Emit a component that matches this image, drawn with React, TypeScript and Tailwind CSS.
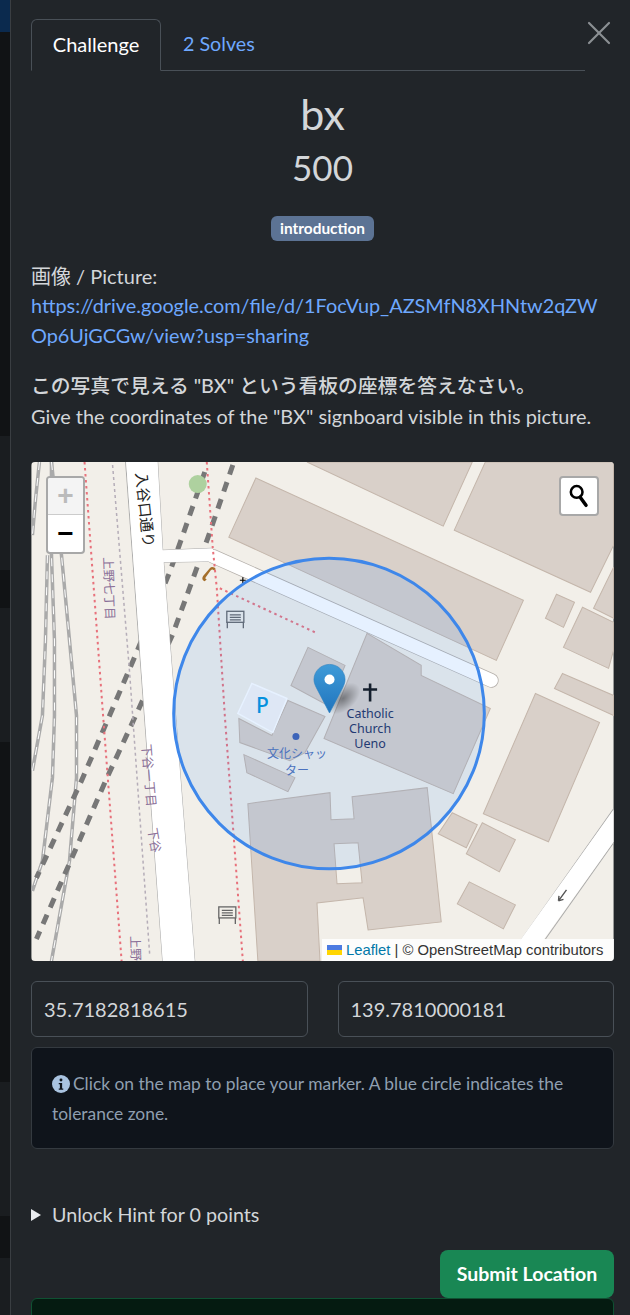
import { X } from "lucide-react";

const bands = [
  "h-[32px] bg-[#0b2a4e]",
  "h-[404px] bg-[#111315]",
  "h-[134px] bg-[#1a1d20]",
  "h-[38px] bg-[#111315]",
  "h-[134px] bg-[#1a1d20]",
  "h-[340px] bg-[#111315]",
  "h-[134px] bg-[#1a1d20]",
  "h-[42px] bg-[#111315]",
  "h-[57px] bg-[#1a1d20]",
];

const buildings = [
  "307,462 472,462 443,526",
  "256,478 523,600 496,660 229,537",
  "485,462 613,462 613,545 590,592 454,530",
  "556,594 574,602 563,627 545,618",
  "582,607 613,622 613,650 608,668 563,647",
  "613,567 593,608 613,618",
  "562,673 613,695 613,715 554,688",
  "535,693 599,722 548,841 483,813",
  "452,812 477,824 466,847 438,833",
  "482,822 515,839 499,871 466,853",
  "469,881 515,904 503,928 457,903",
  "248,803 330,792 331,819 354,818 352,796 427,787 441,921 368,929 363,897 317,902 320,960 258,960",
  "308,647 345,665 328,705 291,685",
  "367,633 421,665 421,675 490,708 453,793 324,738",
  "239,718 272,735 288,700 325,716 305,752 290,760 240,742",
  "244,754 295,777 288,791 247,772",
];

const tracks = [
  "40,462 36,500 33,535",
  "52,462 52,555 55,640 55,715 53,777 43,860 33,890",
  "52,462 62,555 70,640 77,715 77,777 70,860 52,960",
  "48,555 46,640 43,715 33,770",
];

function SignIcon({ x, y }: { x: number; y: number }) {
  return (
    <g transform={`translate(${x} ${y})`} fill="none" stroke="#666" strokeWidth="1.3">
      <rect x="0" y="0" width="17" height="11" />
      <path d="M3 3.5h11M3 6h11M3 8.5h11M0.5 11v6M16.5 11v6" />
    </g>
  );
}

function MapDrawing() {
  return (
    <svg viewBox="32 462 581 498" className="block h-full w-full">
      <defs>
        <linearGradient id="pin" x1="0" y1="0" x2="0" y2="1">
          <stop offset="0" stopColor="#3f9bd8" />
          <stop offset="1" stopColor="#2074bd" />
        </linearGradient>
        <radialGradient id="pinShadow">
          <stop offset="0" stopColor="#000" stopOpacity="0.4" />
          <stop offset="1" stopColor="#000" stopOpacity="0" />
        </radialGradient>
      </defs>
      <rect x="32" y="462" width="581" height="498" fill="#f2efe9" />
      {buildings.map((points) => (
        <polygon key={points} points={points} fill="#d9d0c9" stroke="#c4b6ab" strokeWidth="1" />
      ))}
      <polygon points="334,843 358,842 362,882 337,883" fill="#f2efe9" stroke="#c4b6ab" />
      <polygon points="252,683 287,698 273,732 238,713" fill="#f6f4f4" stroke="#fff" strokeWidth="1.5" />
      {tracks.map((points) => (
        <g key={points} fill="none">
          <polyline points={points} stroke="#aaaaaa" strokeWidth="3.5" />
          <polyline points={points} stroke="#fff" strokeWidth="1" strokeDasharray="8 8" />
        </g>
      ))}
      <g fill="none" stroke="#777" strokeWidth="5" strokeDasharray="10 8">
        <polyline points="233,465 208,538 197,568 173,634 137,713 107,778 37,938" />
        <polyline points="205,472 182,538 170,572 137,652 110,715 82,780 37,877" />
      </g>
      <g fill="none" stroke="#aaa" strokeWidth="1">
        <polyline points="126,462 163,960" />
        <polyline points="158,462 163,550 213,548" />
        <polyline points="164,562 215,561" />
        <polyline points="164,562 195,960" />
        <polyline points="613,808 520,940" />
        <polyline points="613,842 545,938" />
      </g>
      <polyline points="213,556 491,680" fill="none" stroke="#b5b0ab" strokeWidth="14.500" strokeLinecap="round" />
      <polygon points="126.5,462 158,462 163,550 213,548 215,561 164,562 195,960 163,960" fill="#fff" />
      <polyline points="213,556 491,680" fill="none" stroke="#fff" strokeWidth="13" strokeLinecap="round" />
      <polygon points="613,809 613,841 528,960 505,960" fill="#fff" />
      <path d="M566 889 L558 900 M558 900 l0.500 -5 M558 900 l5 -1.500" fill="none" stroke="#555" strokeWidth="1.4" />
      <g fill="none" stroke="#e8727c" strokeWidth="2" strokeDasharray="2.5 3.5">
        <polyline points="85,462 103,708 122,960" />
        <polyline points="207,462 213,548 217,588 225,715 243,960" />
        <polyline points="220,588 315,632" />
      </g>
      <polyline points="113,465 130,672 135,743 150,953" fill="none" stroke="#b5adb8" strokeWidth="1.5" strokeDasharray="3 3" />
      <circle cx="198" cy="484" r="9" fill="#aed19f" />
      <path d="M205 581c-3-1-3-4-1-6l6-7c2-2 5-1 6 1l-2 1c-1-1-2-1-3 0l-5 7c-1 1 0 2 1 2z" fill="#a56f2b" />
      <path d="M243 577v6M240 580h6" stroke="#000" strokeWidth="1.2" />
      <SignIcon x={227} y={611} />
      <SignIcon x={219} y={906} />
      <g fontFamily="'Noto Sans CJK JP', sans-serif" fontSize="12.5" fill="#8a6f98">
        <text transform="translate(104 557) rotate(88)">上野七丁目</text>
        <text transform="translate(142 744) rotate(85)">下谷一丁目</text>
        <text transform="translate(148 828) rotate(80)">下谷</text>
        <text transform="translate(131 935) rotate(88)">上野</text>
      </g>
      <text
        transform="translate(136 473) rotate(84)"
        fontFamily="'Noto Sans CJK JP', sans-serif"
        fontSize="15"
        fill="#222"
      >
        入谷口通り
      </text>
      <path d="M370 683v18M363 689h14" stroke="#111" strokeWidth="2.6" fill="none" />
      <text fontFamily="'Noto Sans', sans-serif" fontSize="12.5" fill="#1f2f5f" textAnchor="middle">
        <tspan x="370" y="717">Catholic</tspan>
        <tspan x="370" y="732">Church</tspan>
        <tspan x="370" y="747">Ueno</tspan>
      </text>
      <text x="262.500" y="713" fontFamily="'Noto Sans', sans-serif" fontSize="21" fontWeight="500" fill="#0092da" textAnchor="middle">P</text>
      <circle cx="296" cy="736" r="3.5" fill="#3f5fb0" />
      <text fontFamily="'Noto Sans CJK JP', sans-serif" fontSize="12" fill="#4f6fb5" textAnchor="middle">
        <tspan x="297" y="757">文化シャッ</tspan>
        <tspan x="297" y="774">ター</tspan>
      </text>
      <circle cx="329" cy="713" r="155" fill="#3388ff" fillOpacity="0.12" stroke="#3e87ea" strokeWidth="3" />
      <ellipse cx="343" cy="698" rx="20" ry="12" fill="url(#pinShadow)" transform="rotate(-40 343 698)" />
      <path
        d="M329.5 664c-8.500 0-15.500 6.800-15.500 15 0 3 1 5.500 2.500 8.500l13 25 13-25c1.500-3 2.500-5.500 2.500-8.500 0-8.200-7-15-15.500-15z"
        fill="url(#pin)"
        stroke="#2a7fc0"
        strokeWidth="0.6"
      />
      <circle cx="329.500" cy="679" r="5" fill="#fff" />
    </svg>
  );
}

export default function App() {
  return (
    <div className="flex h-[1315px] w-[630px] overflow-hidden bg-[#212529] font-['Lato',sans-serif] text-[#d3d6d9]">
      <div className="flex w-[10px] shrink-0 flex-col">
        {bands.map((band, index) => (
          <div key={index} className={band} />
        ))}
      </div>
      <div className="min-w-0 flex-1 border-l border-[#3a3e42] pl-[20px] pr-[16px] pt-[19px]">
        <div className="relative">
          <div className="mr-[29px] flex h-[52px] border-b border-[#495057]">
            <div className="mb-[-1px] flex w-[130px] items-center justify-center rounded-t-md border border-b-[#212529] border-[#495057] pb-[2px] text-[20px] text-white">
              Challenge
            </div>
            <div className="flex items-center pb-[2px] pl-[22px] text-[19.700px] text-[#6ea8fe]">2 Solves</div>
          </div>
          <X className="absolute right-[-5px] top-[-6px] h-[40px] w-[40px] text-[#8b8f93]" strokeWidth={1.3} />
        </div>

        <div className="flex flex-col items-center">
          <h2 className="mt-[18px] text-[43px] leading-[50px] text-[#d3d6d9]">bx</h2>
          <h3 className="mt-[3px] text-[35px] leading-[50px] text-[#d3d6d9]">500</h3>
          <span className="mt-[24px] flex h-[25px] w-[103px] items-center justify-center rounded-md bg-[#5c7394] text-[15.400px] font-bold text-white">
            introduction
          </span>
        </div>

        <p className="mt-[20px] font-['Lato','Noto_Sans_CJK_JP',sans-serif] text-[20px] leading-[30px]">画像 / Picture:</p>
        <a className="mt-[-1px] block break-all pr-[2px] text-[19.850px] leading-[30px] text-[#6ea8fe]">
          https://drive.google.com/file/d/1FocVup_AZSMfN8XHNtw2qZWOp6UjGCGw/view?usp=sharing
        </a>
        <p className="mt-[20px] font-['Lato','Noto_Sans_CJK_JP',sans-serif] text-[19.800px] font-medium leading-[30px]">
          この写真で見える "BX" という看板の座標を答えなさい。
        </p>
        <p className="mt-[1px] text-[19.900px] leading-[30px]">Give the coordinates of the "BX" signboard visible in this picture.</p>

        <div className="relative mt-[31px] h-[499px] overflow-hidden rounded-[4px]">
          <MapDrawing />
          <div className="absolute left-[15px] top-[14px] w-[39px] overflow-hidden rounded-[4px] border-2 border-[#a8a8a8] bg-white font-['Liberation_Sans',sans-serif]">
            <div className="flex h-[37px] items-center justify-center border-b border-[#ccc] bg-[#f4f4f4] text-[28px] font-bold text-[#bbb]">+</div>
            <div className="flex h-[37px] items-center justify-center text-[28px] font-bold text-black">−</div>
          </div>
          <div className="absolute right-[15px] top-[14px] flex h-[40px] w-[40px] items-center justify-center rounded-[4px] border-2 border-[#a8a8a8] bg-white">
            <svg viewBox="0 0 24 24" className="h-[28px] w-[28px]" fill="none" stroke="#000">
              <circle cx="10" cy="8.500" r="5" strokeWidth="2.2" />
              <path d="M13 13l5 7" strokeWidth="3" strokeLinecap="round" />
            </svg>
          </div>
          <div className="absolute bottom-0 right-0 flex h-[22px] w-[292px] items-center gap-[4px] bg-white/85 pl-[5px] font-['Liberation_Sans',sans-serif] text-[14.800px] text-[#333]">
            <svg viewBox="0 0 12 8" className="h-[10px] w-[15px]">
              <rect width="12" height="4" fill="#4c7be1" />
              <rect y="4" width="12" height="4" fill="#ffd500" />
            </svg>
            <span>
              <span className="text-[#0078a8]">Leaflet</span> | © OpenStreetMap contributors
            </span>
          </div>
        </div>

        <div className="mt-[20px] flex gap-[30px]">
          <div className="flex h-[56px] flex-1 items-center rounded-md border border-[#495057] pl-[12px] text-[20px]">35.7182818615</div>
          <div className="flex h-[56px] flex-1 items-center rounded-md border border-[#495057] pl-[12px] text-[20px]">139.7810000181</div>
        </div>

        <div className="mt-[10px] h-[102px] rounded-md border border-[#343a40] bg-[#0f141b] px-[20px] pt-[21px] text-[17.400px] leading-[30px] text-[#8f9fb0]">
          <svg viewBox="0 0 16 16" className="mb-[3px] mr-[3px] inline h-[18px] w-[18px]">
            <circle cx="8" cy="8" r="8" fill="#a9c3e0" />
            <circle cx="8" cy="4.500" r="1.300" fill="#0f141b" />
            <path d="M6 7h3v5h1v1.200H6V12h1V8.200H6z" fill="#0f141b" />
          </svg>
          Click on the map to place your marker. A blue circle indicates the tolerance zone.
        </div>

        <div className="mt-[51px] flex items-center text-[19.700px] leading-[30px]">
          <span className="mr-[11px] h-0 w-0 border-y-[6px] border-l-[10px] border-y-transparent border-l-[#e9ecef]" />
          Unlock Hint for 0 points
        </div>

        <div className="mt-[20px] flex justify-end">
          <div className="flex h-[48px] w-[174px] items-center justify-center rounded-lg bg-[#198754] text-[19.500px] font-bold text-white">
            Submit Location
          </div>
        </div>
        <div className="h-[40px] rounded-t-md border border-[#0f5132] bg-[#051b11]" />
      </div>
    </div>
  );
}
